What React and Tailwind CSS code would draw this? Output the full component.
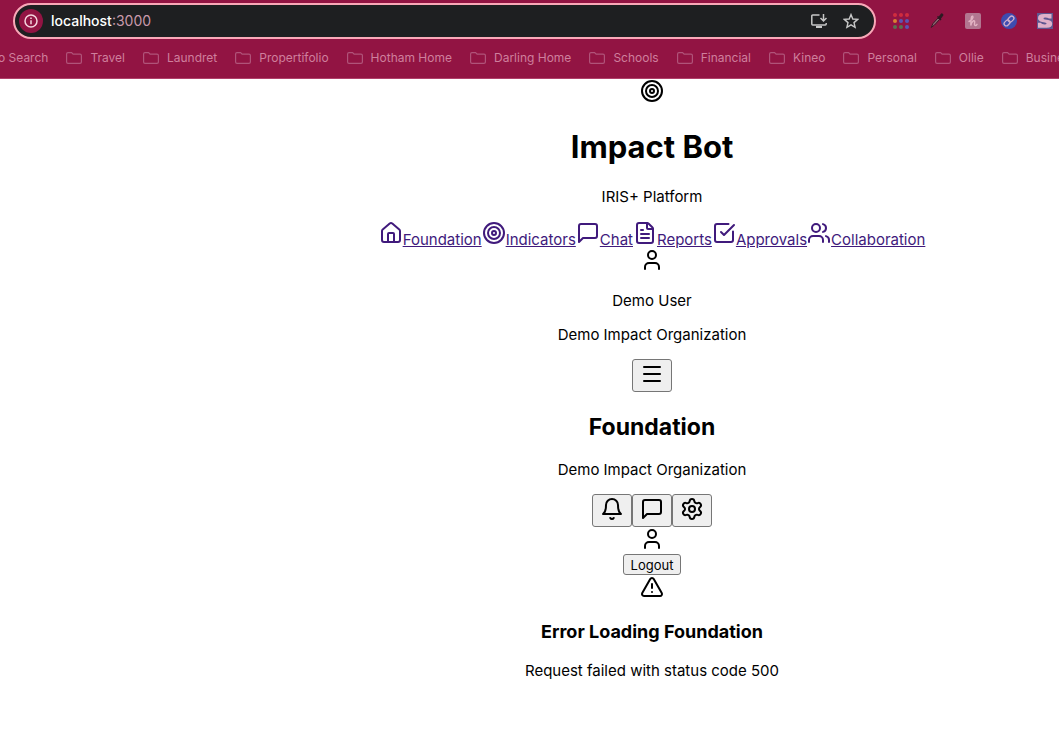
import React from "react";
import { House, Target, FileText, User, Menu, Settings, TriangleAlert } from "lucide-react";

function Icon({ children }) {
  return (
    <svg width="24" height="24" viewBox="0 0 24 24" fill="none" stroke="currentColor" strokeWidth="2" strokeLinecap="round" strokeLinejoin="round" className="shrink-0" aria-hidden="true">
      {children}
    </svg>
  );
}

const Message = () => (
  <Icon><path d="M21 15a2 2 0 0 1-2 2H7l-4 4V5a2 2 0 0 1 2-2h14a2 2 0 0 1 2 2z" /></Icon>
);
const Check = () => (
  <Icon>
    <path d="M21 10.5V19a2 2 0 0 1-2 2H5a2 2 0 0 1-2-2V5a2 2 0 0 1 2-2h11.5" />
    <path d="m9 11 3 3L22 4" />
  </Icon>
);
const People = () => (
  <Icon>
    <path d="M16 21v-2a4 4 0 0 0-4-4H6a4 4 0 0 0-4 4v2" />
    <circle cx="9" cy="7" r="4" />
    <path d="M22 21v-2a4 4 0 0 0-3-3.87" />
    <path d="M16 3.13a4 4 0 0 1 0 7.75" />
  </Icon>
);
const BellIcon = () => (
  <Icon>
    <path d="M6 8a6 6 0 0 1 12 0c0 7 3 9 3 9H3s3-2 3-9" />
    <path d="M10.3 21a1.94 1.94 0 0 0 3.4 0" />
  </Icon>
);

const bookmarks = ["Travel", "Laundret", "Propertifolio", "Hotham Home", "Darling Home", "Schools", "Financial", "Kineo", "Personal", "Ollie", "Business"];

const links = [
  ["Foundation", House],
  ["Indicators", Target],
  ["Chat", Message],
  ["Reports", FileText],
  ["Approvals", Check],
  ["Collaboration", People],
];

function Extensions() {
  const dots = ["#d02c3f", "#d02c3f", "#d02c3f", "#d98032", "#5c55b5", "#5c55b5", "#5a7350", "#5a7350", "#5c55b5"];
  return (
    <div className="flex shrink-0 items-center gap-5">
      <button aria-label="Apps">
        <svg width="16" height="16" viewBox="0 0 16 16" className="block">
          {dots.map((c, i) => (
            <circle key={i} cx={2 + (i % 3) * 6} cy={2 + Math.floor(i / 3) * 6} r="2" fill={c} />
          ))}
        </svg>
      </button>
      <button aria-label="Color picker">
        <svg width="16" height="16" viewBox="0 0 16 16" className="block">
          <path d="M2.200 14.500 4 10.500 9 5l1.500 1.500-5 5.500z" fill="#8d6673" stroke="#3c1a28" strokeWidth="1" />
          <path d="M8 4l3.500 3.500 1-1-.6-.8 2-2.600a1.500 1.500 0 0 0-2.200-2.200L9.800 3.500l-.9-.5z" fill="#2c1a22" />
        </svg>
      </button>
      <button aria-label="Honey">
        <svg width="16" height="16" viewBox="0 0 16 16" className="block">
          <rect width="16" height="16" rx="2" fill="#b27690" />
          <path d="M4 8.500C7 7 8.700 4.500 7.700 3.200 6.300 2.500 5.900 6 5.800 12.500 6.500 9 8.800 6.800 9.600 8.200 10 9.500 8.700 12.500 10.300 12.500q1 0 1.700-1.200" fill="none" stroke="#e3b3c3" strokeWidth="1.400" strokeLinecap="round" />
        </svg>
      </button>
      <button aria-label="Link tool">
        <svg width="16" height="16" viewBox="0 0 16 16" className="block">
          <circle cx="8" cy="8" r="8" fill="#3d4cb0" />
          <g transform="rotate(-45 8 8)" fill="none" stroke="#d0adca" strokeWidth="1.300">
            <rect x="2" y="5.800" width="6.500" height="4.400" rx="2.200" />
            <rect x="7.500" y="5.800" width="6.500" height="4.400" rx="2.200" />
          </g>
        </svg>
      </button>
      <button aria-label="Scribe">
        <svg width="16" height="16" viewBox="0 0 16 16" className="block">
          <rect width="16" height="16" fill="#5f5790" />
          <path d="M14.500 1v4.600h-2.500Q10.500 4.500 8.200 4.500q-1.700 0-1.700.9 0 .8 1.700 1l3 .5q4 .8 4 3.800 0 4-5.500 4H1v-5h2.600q1.400 1.700 4 1.700 2 0 2-.9 0-.8-1.700-1.100l-2.700-.5Q1 8 1 5.200 1 1 6.800 1z" fill="#dfb0c8" />
        </svg>
      </button>
    </div>
  );
}

function Browser() {
  return (
    <header className="overflow-hidden border-b border-[#b0406a] bg-[#921443] font-['Inter',sans-serif]">
      <div className="flex items-center gap-[17px] pt-[3px] pr-[6px] pl-[13px]">
        <div className="flex h-9 min-w-0 grow items-center rounded-full border-2 border-[#f9a8b8] bg-[#1e1f21] pr-[15px] pl-1">
          <button aria-label="Site information" className="grid size-6 shrink-0 place-items-center rounded-full bg-[#921443]">
            <svg width="14" height="14" viewBox="0 0 14 14" fill="none" stroke="#f5d5de" strokeWidth="1.500">
              <circle cx="7" cy="7" r="6" />
              <path d="M7 6.200v4M7 3.500v1.500" />
            </svg>
          </button>
          <div className="ml-2 grow text-sm text-[#c99aab]">
            <span className="font-medium text-white">localhost</span>:3000
          </div>
          <button aria-label="Install" className="mr-4 text-[#c7c7c7]">
            <svg width="16" height="14" viewBox="0 0 16 14" fill="none" stroke="currentColor" strokeWidth="1.500" className="block">
              <path d="M8.500 1H1.700q-.9 0-.9.9v8.200q0 .9.900.9h12.600q.9 0 .9-.9V9" />
              <path d="M12.500 0v6.500M9.500 4l3 3 3-3" />
              <path d="M5 13h6" strokeWidth="2" />
            </svg>
          </button>
          <button aria-label="Bookmark this page" className="text-[#c7c7c7]">
            <svg width="16" height="16" viewBox="0 0 16 16" fill="none" stroke="currentColor" strokeWidth="1.400" className="block">
              <path d="M8 1.600 9.800 6l4.900.4L11 9.600l1.100 4.700L8 11.800l-4.100 2.500L5 9.600 1.300 6.400 6.200 6z" />
            </svg>
          </button>
        </div>
        <Extensions />
      </div>
      <nav aria-label="Bookmarks" className="flex h-[39px] items-center gap-[18px] pb-[2px] whitespace-nowrap text-xs text-[#cf7f9d]">
        <a href="#search" className="-ml-[2px] shrink-0">o Search</a>
        {bookmarks.map((b) => (
          <a key={b} href="#bookmark" className="flex shrink-0 items-center gap-2">
            <svg width="16" height="12" viewBox="0 0 16 12" fill="none" stroke="#b05379" strokeWidth="1.200">
              <path d="M.6 2Q.6.600 2 .6h3.600l1.500 1.600H14q1.400 0 1.400 1.300v6.600q0 1.300-1.400 1.300H2Q.6 11.400.6 10.100z" />
            </svg>
            {b}
          </a>
        ))}
      </nav>
    </header>
  );
}

const boxed = "flex h-[33px] w-10 justify-center rounded-[3px] border border-[#767676] bg-[#efefef] pt-[2px]";

export default function App() {
  return (
    <div className="min-h-screen bg-white">
      <Browser />
      <main className="flex flex-col items-center pl-[245px] font-['Inter',sans-serif] text-[15px] leading-[18px] text-black">
        <Target />
        <h1 className="mt-[25px] text-[31px] leading-[38px] font-bold">Impact Bot</h1>
        <p className="mt-[22px]">IRIS+ Platform</p>
        <nav className="mt-[15px] flex h-[27px] text-[#401a7c]">
          {links.map(([label, Glyph]) => (
            <a key={label} href="#section" className="flex items-baseline">
              <Glyph className="shrink-0" />
              <span className="underline">{label}</span>
            </a>
          ))}
        </nav>
        <User />
        <p className="mt-5">Demo User</p>
        <p className="mt-4">Demo Impact Organization</p>
        <button aria-label="Menu" className={`mt-[15px] ${boxed}`}><Menu /></button>
        <h2 className="mt-[21px] text-[23px] leading-[29px] font-bold">Foundation</h2>
        <p className="mt-[19px]">Demo Impact Organization</p>
        <div className="mt-[15px] flex">
          <button aria-label="Notifications" className={boxed}><BellIcon /></button>
          <button aria-label="Messages" className={boxed}><Message /></button>
          <button aria-label="Settings" className={boxed}><Settings /></button>
        </div>
        <User />
        <button className="mt-[3px] h-[21px] rounded-[3px] border border-[#767676] bg-[#efefef] px-[7px] text-[13px]">Logout</button>
        <TriangleAlert />
        <h3 className="mt-[22px] text-[18px] leading-[22px] font-bold">Error Loading Foundation</h3>
        <p className="mt-[19px]">Request failed with status code 500</p>
      </main>
    </div>
  );
}
